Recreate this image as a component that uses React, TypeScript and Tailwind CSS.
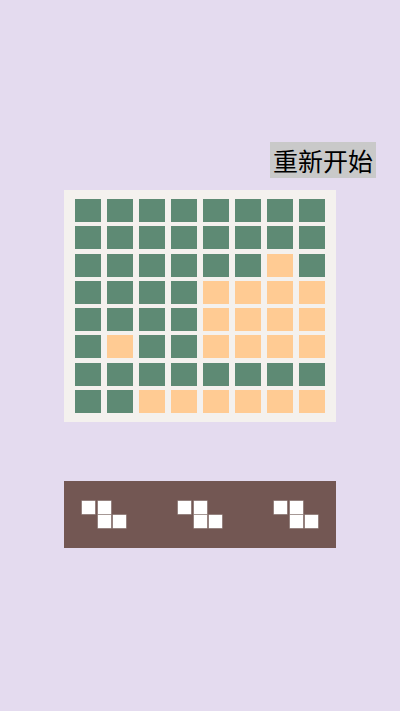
import React from "react";

// 0 = green, 1 = orange
const board: number[][] = [
  [0, 0, 0, 0, 0, 0, 0, 0],
  [0, 0, 0, 0, 0, 0, 0, 0],
  [0, 0, 0, 0, 0, 0, 1, 0],
  [0, 0, 0, 0, 1, 1, 1, 1],
  [0, 0, 0, 0, 1, 1, 1, 1],
  [0, 1, 0, 0, 1, 1, 1, 1],
  [0, 0, 0, 0, 0, 0, 0, 0],
  [0, 0, 1, 1, 1, 1, 1, 1],
];

function Piece() {
  const sq = "w-[13px] h-[13px] bg-white shadow-[0_0_0_0.5px_#b8aeab]";
  return (
    <div className="flex flex-col gap-[1.5px]">
      <div className="flex gap-[2.5px]">
        <div className={sq} />
        <div className={sq} />
      </div>
      <div className="flex gap-[2.5px] pl-[15.5px]">
        <div className={sq} />
        <div className={sq} />
      </div>
    </div>
  );
}

export default function App() {
  return (
    <div
      className="w-[400px] h-[711px] bg-[#e4dbef] flex flex-col items-center"
      style={{ fontFamily: '"Noto Sans CJK SC", "Noto Sans", sans-serif' }}
    >
      <div className="w-full flex justify-end pr-[24px] pt-[142px]">
        <button className="h-[36px] px-[3px] bg-[#c9c9c9] text-black text-[25px] leading-[36px]">
          重新开始
        </button>
      </div>

      <div className="mt-[12px] w-[272px] h-[232px] bg-[#f4f1ee] px-[11px] py-[9px] grid grid-cols-8 gap-x-[6px] gap-y-[4.3px]">
        {board.flat().map((c, i) => (
          <div
            key={i}
            className={`h-[23px] ${c ? "bg-[#ffcb93]" : "bg-[#5e8a74]"}`}
          />
        ))}
      </div>

      <div className="mt-[59px] w-[272px] h-[67px] bg-[#735753] flex items-center justify-between px-[18px]">
        <Piece />
        <Piece />
        <Piece />
      </div>
    </div>
  );
}
